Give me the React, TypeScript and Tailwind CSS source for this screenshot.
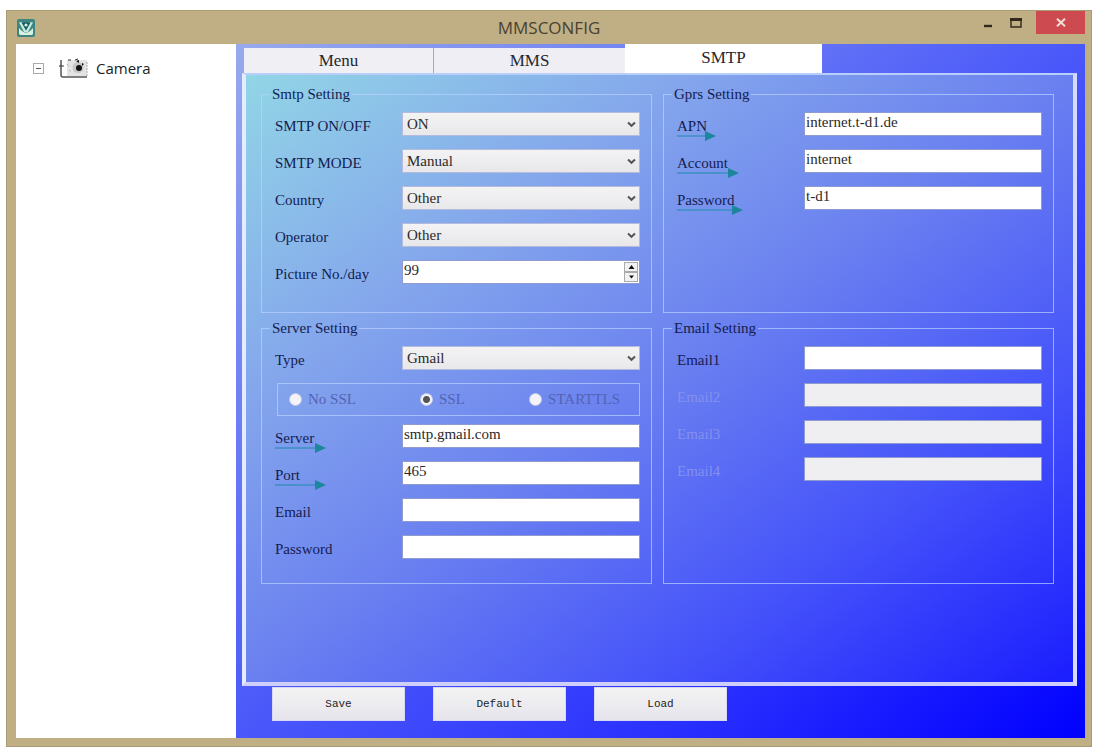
import { useState, type ReactNode } from "react";

const textBox =
    "h-6 w-full min-w-0 rounded-none border border-[#8f9bd0] bg-white px-px pb-1 text-[15px] leading-[18px] text-[#2a2a2a] outline-none disabled:bg-[#efeff1]";

function Pointer({ width }: { width: number }) {
    return (
        <svg className="absolute top-3.5 left-0" width={width} height={12} viewBox={`0 0 ${width} 12`} aria-hidden="true">
            <path d={`M0 6H${width - 8}`} stroke="#3b8fc0" strokeWidth="1.4" />
            <path d={`M${width - 11} 1L${width} 6L${width - 11} 11Z`} fill="#1c869c" />
        </svg>
    );
}

function Row({ id, label, pointer, disabled, children }: { id: string; label: string; pointer?: number; disabled?: boolean; children: ReactNode }) {
    return (
        <div className="flex h-6 items-center">
            <div className="w-[127px] shrink-0 pt-1">
                <label htmlFor={id} className={`relative block w-fit leading-5 whitespace-nowrap ${disabled ? "text-[#8490ee]" : "text-[#141c50]"}`}>
                    {label}
                    {pointer && <Pointer width={pointer} />}
                </label>
            </div>
            <div className="relative min-w-0 flex-1">{children}</div>
        </div>
    );
}

function TextRow({ id, label, value = "", pointer, disabled }: { id: string; label: string; value?: string; pointer?: number; disabled?: boolean }) {
    return (
        <Row id={id} label={label} pointer={pointer} disabled={disabled}>
            <input id={id} type="text" defaultValue={value} disabled={disabled} className={`${textBox} block`} />
        </Row>
    );
}

function SelectRow({ id, label, options }: { id: string; label: string; options: string[] }) {
    return (
        <Row id={id} label={label}>
            <select
                id={id}
                className="block h-6 w-full appearance-none rounded-none border border-[#b4bbdc] bg-linear-to-b from-[#f3f3f4] to-[#e8e7ea] pl-1 text-[15px] leading-5 text-[#2a2a2a] outline-none"
            >
                {options.map((option) => (
                    <option key={option}>{option}</option>
                ))}
            </select>
            <svg className="pointer-events-none absolute top-[9px] right-1" width="9" height="7" viewBox="0 0 9 7" aria-hidden="true">
                <path d="M1 1.5L4.5 4.8L8 1.5" fill="none" stroke="#555" strokeWidth="2" />
            </svg>
        </Row>
    );
}

function Group({ title, children }: { title: string; children: ReactNode }) {
    return (
        <fieldset className="min-w-0 border border-[#b9d2ff]/70 px-2">
            <legend className="px-0.5 leading-5 text-[#141c50]">{title}</legend>
            <div className="flex flex-col gap-[13px] pt-2 pr-[3px] pl-[5px]">{children}</div>
        </fieldset>
    );
}

function AppIcon() {
    return (
        <svg width="18" height="18" viewBox="0 0 18 18" aria-hidden="true">
            <rect width="18" height="18" rx="2" fill="#3d8580" />
            <path d="M2 9V14.5Q2 16 4 16H14Q16 16 16 14.5V9L13 12Q9 15 5 12Z" fill="#d9f0df" />
            <path d="M2 3.5L5 3L9 11L13 3L16 3.5L11 13H7Z" fill="#c4ebdf" />
            <path d="M4.5 3.5H13.5L9 11.5Z" fill="#155b60" />
            <circle cx="9" cy="6" r="1.6" fill="#d9f0df" />
        </svg>
    );
}

function CameraIcon() {
    return (
        <svg width="32" height="21" viewBox="0 0 32 21" aria-hidden="true">
            <rect x="9" y="2" width="20" height="16" fill="#e4e4e4" />
            <path d="M3 2V17Q3 19 5 19H29" fill="none" stroke="#555" strokeWidth="1.5" />
            <path d="M1 8H6M10 2H13M17 2L20 1" stroke="#333" strokeWidth="1" />
            <path d="M9 6L11 9M11 12L13 14M29 4V18" stroke="#aaa" strokeWidth="1" strokeDasharray="2 1" />
            <circle cx="20" cy="9.5" r="5.5" fill="#c7c7c7" />
            <path d="M18 3L21 2V5ZM24 5L26 6L24 8Z" fill="#111" />
            <circle cx="21" cy="10" r="3" fill="#111" />
        </svg>
    );
}

function TitleBar() {
    return (
        <header className="grid h-[33px] grid-cols-[1fr_auto_1fr] items-center font-['Open_Sans',sans-serif]">
            <div className="pl-2.5">
                <AppIcon />
            </div>
            <h1 className="text-[17px] leading-6 text-[#4a4232]">MMSCONFIG</h1>
            <div className="flex justify-end self-start pr-1.5">
                <button type="button" aria-label="Minimize" className="flex h-6 w-7 items-center justify-center">
                    <svg width="10" height="12" viewBox="0 0 10 12">
                        <path d="M1 9H9" stroke="#33291a" strokeWidth="2.4" />
                    </svg>
                </button>
                <button type="button" aria-label="Maximize" className="flex h-6 w-7 items-center justify-center">
                    <svg width="12" height="10" viewBox="0 0 12 10">
                        <path d="M1 1V9H11V1" fill="none" stroke="#33291a" strokeWidth="1.4" />
                        <path d="M0 1.5H12" stroke="#33291a" strokeWidth="3" />
                    </svg>
                </button>
                <button type="button" aria-label="Close" className="ml-1.5 flex h-[23px] w-[49px] items-center justify-center bg-[#cd4a51]">
                    <svg width="10" height="9" viewBox="0 0 10 9">
                        <path d="M1 .8L9 8.2M9 .8L1 8.2" stroke="#f6dfd8" strokeWidth="2" />
                    </svg>
                </button>
            </div>
        </header>
    );
}

export default function App() {
    const [pictures, setPictures] = useState(99);
    const [ssl, setSsl] = useState("SSL");

    return (
        <div className="flex min-h-screen bg-white pt-2.5 pr-[3px] pb-px pl-1.5 font-['Liberation_Serif',serif] text-[15px]">
            <div className="flex min-w-0 flex-1 flex-col border border-[#aa9b77] bg-[#c0ae84]">
                <TitleBar />
                <div className="mr-1.5 mb-2 ml-[9px] flex flex-1">
                    {/* Device tree */}
                    <aside className="w-[220px] shrink-0 bg-white">
                        <div className="flex items-center pt-3 pl-[17px] font-['Open_Sans',sans-serif]">
                            <button type="button" aria-label="Collapse" className="flex size-[11px] items-center justify-center border border-[#aaa]">
                                <span className="h-px w-[5px] bg-[#555]" />
                            </button>
                            <div className="ml-3.5">
                                <CameraIcon />
                            </div>
                            <span className="ml-1.5 text-[15px] leading-6 text-[#222]">Camera</span>
                        </div>
                    </aside>

                    <main className="flex min-w-0 flex-1 flex-col bg-[linear-gradient(to_bottom_right,#98aaec,#4a58fa_50%,#2a30fe_75%,#0000ff)] pr-2 pl-1.5">
                        <nav className="flex h-[29px] items-end pl-0.5 text-[17px] text-[#26262e]">
                            <button type="button" className="h-[25px] w-[190px] border-r border-[#a9a9bd] bg-[#f0eff4] leading-6">Menu</button>
                            <button type="button" className="h-[25px] w-[191px] bg-[#efeef4] leading-6">MMS</button>
                            <button type="button" className="h-[29px] w-[197px] bg-white pb-0.5 leading-6">SMTP</button>
                        </nav>

                        <section className="flex-1 border-x-4 border-t-2 border-b-4 border-t-[#b9cffb] border-r-[#d3dcff] border-b-[#cfcffc] border-l-[#e4edff] bg-[linear-gradient(to_bottom_right,#92d6e6,#84a6ec_27%,#6a80f0_50%,#4452fa_75%,#1a1cfe)] bg-origin-border pt-[9px] pr-[19px] pb-6 pl-[15px]">
                            <form id="smtp" className="grid grid-cols-2 grid-rows-[229px_266px] gap-x-[11px] gap-y-[5px]" onSubmit={(e) => e.preventDefault()}>
                                <Group title="Smtp Setting">
                                    <SelectRow id="onoff" label="SMTP ON/OFF" options={["ON", "OFF"]} />
                                    <SelectRow id="mode" label="SMTP MODE" options={["Manual", "Auto"]} />
                                    <SelectRow id="country" label="Country" options={["Other"]} />
                                    <SelectRow id="operator" label="Operator" options={["Other"]} />
                                    <Row id="pictures" label="Picture No./day">
                                        <input
                                            id="pictures"
                                            type="number"
                                            value={pictures}
                                            onChange={(e) => setPictures(Number(e.target.value))}
                                            className={`${textBox} block [appearance:textfield] [&::-webkit-inner-spin-button]:appearance-none`}
                                        />
                                        <div className="absolute inset-y-0.5 right-0.5 flex w-3.5 flex-col">
                                            <button type="button" aria-label="More" onClick={() => setPictures(pictures + 1)} className="flex flex-1 items-center justify-center border border-[#aaa] bg-[#f2f2f2]">
                                                <svg width="7" height="4" viewBox="0 0 7 4"><path d="M.5 4L3.5 0L6.5 4Z" fill="#111" /></svg>
                                            </button>
                                            <button type="button" aria-label="Less" onClick={() => setPictures(pictures - 1)} className="flex flex-1 items-center justify-center border border-[#aaa] bg-[#f2f2f2]">
                                                <svg width="7" height="4" viewBox="0 0 7 4"><path d="M1 .5L3.5 3.5L6 .5Z" fill="#111" /></svg>
                                            </button>
                                        </div>
                                    </Row>
                                </Group>

                                <Group title="Gprs Setting">
                                    <TextRow id="apn" label="APN" value="internet.t-d1.de" pointer={39} />
                                    <TextRow id="account" label="Account" value="internet" pointer={62} />
                                    <TextRow id="gprs-password" label="Password" value="t-d1" pointer={66} />
                                </Group>

                                <Group title="Server Setting">
                                    <SelectRow id="type" label="Type" options={["Gmail", "Other"]} />
                                    <div className="-mb-[5px] ml-0.5 grid h-[33px] grid-cols-[131fr_109fr_110fr] items-center border border-[#b9d2ff]/70 pl-[11px]">
                                        {["No SSL", "SSL", "STARTTLS"].map((name) => (
                                            <label key={name} className="flex items-center gap-1.5 whitespace-nowrap text-[#5363b4]">
                                                <input
                                                    type="radio"
                                                    name="ssl"
                                                    disabled
                                                    checked={ssl === name}
                                                    onChange={() => setSsl(name)}
                                                    className="size-[13px] shrink-0 appearance-none rounded-full border border-[#c4c8e4] bg-[#f4f4f8] checked:bg-[radial-gradient(circle,#555_3px,#f4f4f8_4px)]"
                                                />
                                                {name}
                                            </label>
                                        ))}
                                    </div>
                                    <TextRow id="server" label="Server" value="smtp.gmail.com" pointer={51} />
                                    <TextRow id="port" label="Port" value="465" pointer={51} />
                                    <TextRow id="email" label="Email" />
                                    <TextRow id="password" label="Password" />
                                </Group>

                                <Group title="Email Setting">
                                    <TextRow id="email1" label="Email1" />
                                    <TextRow id="email2" label="Email2" disabled />
                                    <TextRow id="email3" label="Email3" disabled />
                                    <TextRow id="email4" label="Email4" disabled />
                                </Group>
                            </form>
                        </section>

                        <div className="flex gap-7 pt-px pb-[17px] pl-[30px]">
                            {["Save", "Default", "Load"].map((name) => (
                                <button
                                    key={name}
                                    type="button"
                                    className="h-[34px] w-[133px] border border-[#d6d8f4] bg-linear-to-b from-[#f3f3f3] to-[#e6e4ec] font-['Liberation_Mono',monospace] text-[11px] text-[#222]"
                                >
                                    {name}
                                </button>
                            ))}
                        </div>
                    </main>
                </div>
            </div>
        </div>
    );
}
